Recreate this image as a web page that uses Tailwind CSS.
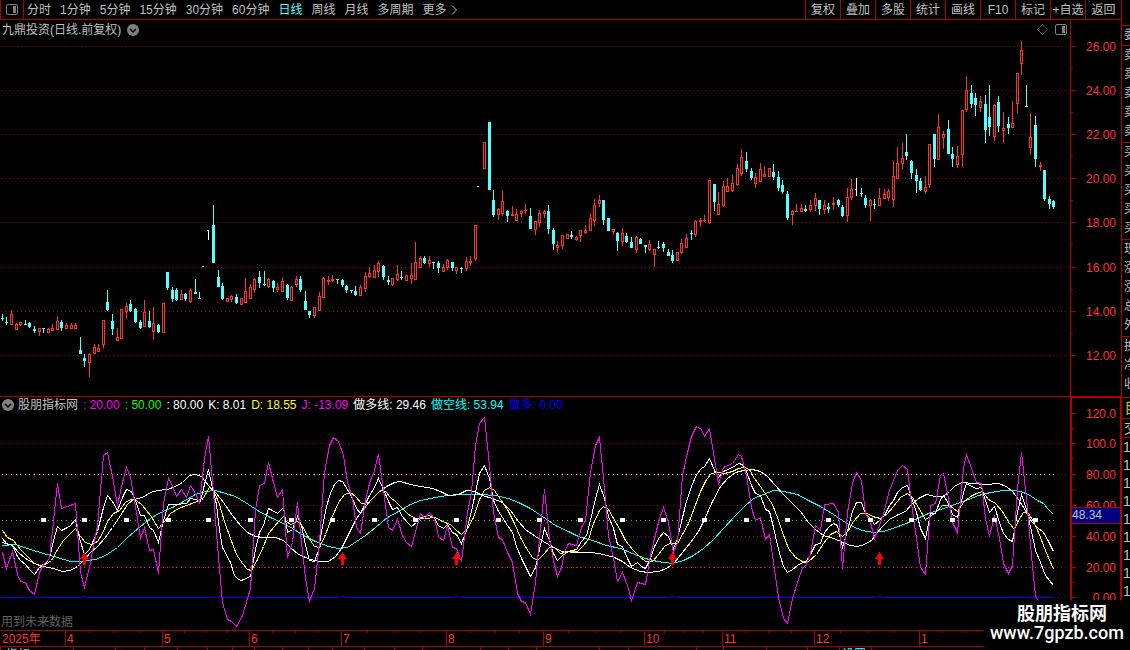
<!DOCTYPE html>
<html lang="zh-CN">
<head>
    <meta charset="UTF-8">
    <meta name="viewport" content="width=device-width, initial-scale=1.0">
    <title>九鼎投资 日线</title>
    <script src="https://cdn.jsdelivr.net/npm/@tailwindcss/browser@4"></script>
</head>
<body class="relative flex h-screen overflow-hidden bg-black font-['Liberation_Sans','Noto_Sans_CJK_SC',sans-serif] text-[12px] leading-[18px] text-[#c0c0c0]">

    <main class="flex min-w-0 flex-1 flex-col">
        <!-- Period tabs and tools -->
        <nav class="flex h-[20px] shrink-0 items-stretch justify-between border-b border-[#b00000] whitespace-nowrap">
            <div class="flex items-center gap-[9px]">
                <button aria-label="侧栏" class="-mr-[6px] flex h-full w-[24px] items-center justify-center border-x border-[#b00000]">
                    <svg width="12" height="11" fill="none"><rect x="0.5" y="0.5" width="11" height="10" rx="1.5" stroke="#808080"/><rect x="7" y="2" width="3" height="7" fill="#808080"/></svg>
                </button>
                <button>分时</button>
                <button>1分钟</button>
                <button>5分钟</button>
                <button>15分钟</button>
                <button>30分钟</button>
                <button>60分钟</button>
                <button class="text-[#54ffff]">日线</button>
                <button>周线</button>
                <button>月线</button>
                <button>多周期</button>
                <button class="flex items-center gap-1">更多
                    <svg width="7" height="10" fill="none" stroke="#c0c0c0"><path d="M1 0.5L5.5 5L1 9.5"/></svg>
                </button>
            </div>
            <div class="flex">
                <button class="w-[35px] border-l border-[#b00000]">复权</button>
                <button class="w-[35px] border-l border-[#b00000]">叠加</button>
                <button class="w-[35px] border-l border-[#b00000]">多股</button>
                <button class="w-[35px] border-l border-[#b00000]">统计</button>
                <button class="w-[35px] border-l border-[#b00000]">画线</button>
                <button class="w-[35px] border-l border-[#b00000]">F10</button>
                <button class="w-[35px] border-l border-[#b00000]">标记</button>
                <button class="w-[35px] border-l border-[#b00000]">+自选</button>
                <button class="w-[36px] border-l border-[#b00000]">返回</button>
            </div>
        </nav>

        <!-- Candles -->
        <section class="flex min-h-0 flex-1">
            <div class="flex min-w-0 flex-1 flex-col">
                <header class="flex h-[19px] shrink-0 items-center justify-between pr-[3px] pl-[2px]">
                    <div class="flex items-center gap-[6px]">
                        <h1>九鼎投资(日线.前复权)</h1>
                        <button aria-label="展开"><svg class="block" width="12" height="12"><circle cx="6" cy="6" r="6" fill="#808080"/><path d="M3 5L6 8L9 5" fill="none" stroke="#000" stroke-width="1.5"/></svg></button>
                    </div>
                    <div class="flex items-center gap-[7px]">
                        <svg width="11" height="11" fill="none" stroke="#808080"><path d="M5.5 0.5L10.5 5.5L5.5 10.5L0.5 5.5Z" stroke-dasharray="1 0.5"/></svg>
                        <svg width="12" height="11" fill="none"><rect x="0.5" y="0.5" width="11" height="10" rx="1.5" stroke="#808080"/><rect x="7" y="2" width="3" height="7" fill="#808080"/></svg>
                    </div>
                </header>
                <svg class="block min-h-0 w-full flex-1" shape-rendering="crispEdges"><g id="candles" transform="translate(0,-39)"></g></svg>
            </div>
            <svg class="block h-full w-[51px] shrink-0 border-l border-[#b00000]"><g id="priceAxis" transform="translate(-1071,-20)" shape-rendering="crispEdges"></g></svg>
        </section>

        <!-- Indicator -->
        <section class="flex h-[234px] shrink-0 border-t border-[#b00000]">
            <div class="relative flex min-w-0 flex-1 flex-col">
                <header class="flex h-[16px] shrink-0 items-center gap-[5px] pl-[2px] whitespace-nowrap">
                    <div class="flex items-center gap-[4px]">
                        <button aria-label="展开"><svg class="block" width="12" height="12"><circle cx="6" cy="6" r="6" fill="#808080"/><path d="M3 5L6 8L9 5" fill="none" stroke="#000" stroke-width="1.5"/></svg></button>
                        <h2>股朋指标网</h2>
                    </div>
                    <span class="text-[#ff00ff]">: 20.00</span>
                    <span class="text-[#00ff00]">: 50.00</span>
                    <span class="text-white">: 80.00</span>
                    <span class="text-white">K: 8.01</span>
                    <span class="text-[#ffff00]">D: 18.55</span>
                    <span class="text-[#ff00ff]">J: -13.09</span>
                    <span class="text-white">做多线: 29.46</span>
                    <span class="text-[#00ffff]">做空线: 53.94</span>
                    <span class="text-[#0000ff]">做多: 0.00</span>
                </header>
                <svg class="block min-h-0 w-full flex-1" shape-rendering="crispEdges"><g id="indicator" transform="translate(0,-413)"></g></svg>
                <p class="absolute bottom-0 left-[1px] leading-[16px] text-[#606060]">用到未来数据</p>
            </div>
            <svg class="block h-full w-[51px] shrink-0 border-t border-r border-l-2 border-[#b00000]"><g id="valueAxis" transform="translate(-1072,-398)" shape-rendering="crispEdges"></g></svg>
        </section>

        <!-- Months -->
        <footer class="h-[20px] shrink-0 border-t border-[#b00000]">
            <svg class="block h-full w-full"><g id="months" transform="translate(0,-631)" shape-rendering="crispEdges"></g></svg>
        </footer>
    </main>

    <!-- Quote panel, only its left edge is on screen -->
    <aside class="w-[9px] shrink-0 overflow-hidden border-l border-[#b00000] leading-[19px]">
        <div class="h-[26px] border-b border-[#b00000]"></div>
        <div class="h-[20px] border-b border-[#b00000] pl-[2px]">委</div>
        <div class="h-[97px] border-b border-[#b00000] pl-[2px]"><p>卖</p><p>卖</p><p>卖</p><p>卖</p><p>卖</p></div>
        <div class="h-[97px] border-b border-[#b00000] pl-[2px]"><p>买</p><p>买</p><p>买</p><p>买</p><p>买</p></div>
        <div class="h-[97px] border-b border-[#b00000] pl-[2px]"><p>现</p><p>涨</p><p>涨</p><p>总</p><p>外</p></div>
        <div class="h-[61px] border-b border-[#b00000] pl-[2px]"><p>换</p><p>净</p><p>收</p></div>
        <div class="h-[21px] border-b border-[#b00000] pl-[2px] text-[16px] text-[#c0c000]">自</div>
        <div class="h-[19px] border-b border-[#b00000] pl-[2px] text-[14px]">交</div>
        <div class="pl-[1px] text-[14px] leading-[18px]"><p>1</p><p>1</p><p>1</p><p>1</p><p>1</p><p>1</p><p>1</p><p>1</p><p>1</p></div>
    </aside>

    <!-- Site mark -->
    <div class="absolute right-0 bottom-0 h-[50px] w-[146px] bg-black pt-[4px] pl-[6px] text-white">
        <p class="pl-[27px] text-[18px] leading-[20px] font-bold whitespace-nowrap">股朋指标网</p>
        <p class="font-[Roboto,sans-serif] text-[18px] leading-[18px] font-medium">www.7gpzb.com</p>
    </div>

    <script>
        const NS = 'http://www.w3.org/2000/svg';
        const RED = '#b00000';

        function add(parent, tag, attrs, text) {
            const el = document.createElementNS(NS, tag);
            for (const k in attrs) el.setAttribute(k, attrs[k]);
            if (text) el.textContent = text;
            parent.appendChild(el);
            return el;
        }
        function box(parent, x, y, w, h, fill) {
            add(parent, 'rect', { x, y, width: w, height: h, fill });
        }
        function dots(parent, y, color, from, to) {
            add(parent, 'path', { d: `M${from} ${y + 0.5}H${to}`, stroke: color, 'stroke-dasharray': '1 3' });
        }

        // ---- Candles: x, high, body top, body bottom, low, kind (r up, c down, w flat)
        const candles = `
2 314 318 318 320 c|6 317 322 322 324 c|11 310 314 324 324 r|16 323 324 329 329 r|20 322 322 324 325 r|25 320 324 324 324 c
29 322 323 326 327 c|34 326 329 330 332 c|39 328 328 331 335 r|43 328 328 328 332 c|48 328 329 332 332 r|52 324 328 330 330 r
57 316 321 329 329 r|61 320 322 327 330 c|66 323 325 328 328 r|71 323 325 328 328 r|75 323 325 328 328 r|80 337 350 353 353 c
84 354 358 360 366 c|89 353 354 362 376 r|94 344 347 353 353 r|98 344 348 351 351 r|103 320 320 344 347 r|107 290 302 309 310 c
112 314 321 328 334 c|117 328 337 340 340 r|121 309 309 338 338 r|126 303 306 311 318 r|130 300 304 310 311 c|135 308 309 321 322 c
140 320 322 327 328 c|144 300 312 326 326 r|149 311 321 326 327 c|153 307 323 331 339 r|158 324 325 331 332 c|163 303 303 332 332 r
167 272 272 287 289 c|172 287 290 298 301 c|176 288 290 299 300 c|181 290 294 299 299 r|185 293 294 298 300 c|190 288 290 301 302 r
195 279 292 293 293 c|199 292 298 298 298 c|203 266 266 266 266 w|208 230 230 230 239 w|213 205 225 262 262 c|218 270 277 286 286 c
222 283 286 298 299 c|227 298 298 301 301 r|231 295 296 299 301 r|236 294 297 302 303 c|241 298 298 304 304 r|245 278 291 302 302 r
250 284 287 298 298 r|254 278 279 289 292 r|259 271 277 282 287 c|264 271 284 284 285 c|268 278 279 286 287 r|273 280 281 287 291 c
277 283 287 289 291 r|282 277 281 291 291 r|287 284 285 297 299 c|291 286 287 300 300 r|296 276 279 284 286 r|300 276 279 289 291 c
305 291 301 309 309 c|309 311 311 314 317 c|314 307 307 315 317 r|319 292 296 310 310 r|323 277 278 297 297 r|328 276 280 281 284 r
332 275 279 280 281 r|337 279 279 279 283 c|342 279 280 284 286 c|346 285 286 289 292 c|351 290 290 290 292 c|355 286 291 294 295 c
360 285 287 295 295 r|365 272 276 288 291 r|369 267 273 276 277 r|374 265 270 277 277 r|378 261 263 271 276 r|383 265 266 276 279 c
388 276 280 281 284 c|392 278 278 284 285 r|397 265 274 279 280 r|401 271 277 277 279 c|406 275 275 280 280 r|411 263 275 278 283 r
415 242 262 279 279 r|420 256 258 267 267 r|424 256 258 262 263 c|429 256 260 263 266 r|433 262 262 262 268 c|438 261 263 267 272 c
443 264 267 271 271 r|447 259 260 267 269 r|452 262 262 267 270 c|456 267 267 270 273 r|461 267 268 268 272 c|466 257 261 268 270 r
470 256 261 262 265 r|475 225 225 258 260 r|478 186 186 186 186 w|484 142 142 168 168 r|489 122 122 189 189 c|493 190 200 214 216 c
498 208 209 214 219 r|502 191 201 213 215 r|507 210 211 215 221 c|512 206 214 215 215 r|516 209 214 220 220 r|521 210 211 213 216 r
525 204 210 210 213 r|530 208 216 228 228 c|535 221 221 229 234 r|539 210 213 222 226 r|544 210 211 213 217 r|548 205 211 228 233 c
553 228 230 243 249 c|557 241 245 247 252 r|562 235 235 245 248 r|567 234 234 238 238 r|571 231 235 236 238 c|576 236 237 239 240 r
580 230 230 235 241 r|585 225 230 232 233 r|590 213 218 230 230 r|594 199 205 220 225 r|599 195 200 203 206 r|603 200 200 219 224 c
608 218 218 230 230 c|613 229 229 231 234 r|617 232 233 240 250 c|622 228 233 241 245 r|626 233 236 241 242 c|631 237 242 247 247 c
636 236 237 249 252 r|640 238 239 243 243 c|645 245 245 246 252 c|649 240 244 249 250 r|654 249 249 254 266 r|658 241 247 247 248 c
663 242 244 247 251 c|668 249 252 255 255 c|672 250 255 260 262 c|677 252 252 260 260 r|681 239 243 252 253 r|686 234 238 247 247 r
691 230 233 233 239 c|695 220 221 234 236 r|700 218 220 221 226 r|704 215 220 220 221 r|709 180 180 222 223 r|714 184 184 201 210 c
718 192 204 214 214 r|723 181 186 205 206 r|727 178 186 191 191 r|732 175 183 190 191 r|737 164 168 184 185 r|741 149 157 173 175 r
746 152 161 168 171 c|751 168 171 177 179 c|755 173 177 183 187 r|760 163 169 181 181 r|764 166 174 176 176 r|769 168 168 176 176 r
773 164 172 176 179 c|778 171 177 187 190 c|782 180 185 191 193 c|787 191 194 217 219 c|792 210 211 214 224 r|796 204 211 211 211 r
801 204 208 211 211 r|805 205 209 210 211 c|810 200 205 209 211 r|815 193 198 205 210 r|819 200 200 208 214 c|824 200 205 209 213 r
828 203 207 208 212 c|833 197 203 204 209 r|838 199 200 204 206 c|842 205 207 215 216 c|847 188 197 215 221 r|851 179 189 197 199 r
856 178 189 189 195 w|861 188 193 193 196 c|865 195 198 204 207 c|870 199 200 205 220 r|874 199 204 204 208 c|879 188 198 205 205 r
884 189 194 198 198 r|888 189 191 197 200 r|893 161 176 199 206 r|897 147 163 178 178 r|902 143 158 163 168 r|906 134 152 155 159 c
911 160 161 172 178 c|916 169 175 180 192 c|920 178 181 189 190 c|925 176 187 191 193 r|929 144 144 184 187 r|934 134 134 158 166 c
938 114 127 159 159 r|943 131 134 137 148 r|948 120 129 153 153 c|952 147 154 158 166 c|957 146 156 164 167 r|962 110 110 154 166 r
966 76 90 109 111 r|971 85 93 103 107 c|975 93 98 104 115 c|980 96 101 107 111 r|985 95 104 129 142 c|989 85 117 126 135 c
994 104 105 136 140 r|998 96 102 125 131 c|1003 112 128 130 142 r|1008 117 124 127 133 c|1012 101 123 127 127 r|1017 73 73 103 112 r
1021 41 50 63 74 r|1026 85 106 106 106 c|1030 113 137 147 154 r|1035 116 125 158 166 c|1040 162 165 166 170 r|1044 170 170 198 200 c
1049 196 199 203 208 c|1053 200 201 206 208 c`;

        const fills = { r: '#ff3232', c: '#54ffff', w: '#ffffff' };
        const cg = document.getElementById('candles');
        const priceRows = [46, 90, 134, 178, 222, 267, 311, 355];
        const barXs = [];
        priceRows.forEach(y => dots(cg, y, RED, 1, 1067));

        candles.trim().split(/[|\n]/).forEach(row => {
            const p = row.split(' ');
            const [x, hi, top, bot, lo] = p.map(Number);
            const fill = fills[p[5]];
            barXs.push(x);
            box(cg, x, hi, 1, lo - hi + 1, fill);
            if (p[5] === 'w') {
                box(cg, x - 1, top, 2, 1, fill);
                return;
            }
            box(cg, x - 1, top, 3, bot - top + 1, fill);
            if (p[5] === 'r' && bot - top > 1) box(cg, x, top + 1, 1, bot - top - 1, '#000');
        });

        // ---- Price axis
        const pa = document.getElementById('priceAxis');
        priceRows.forEach((y, i) => {
            box(pa, 1071, y, 5, 1, RED);
            if (i < 7) box(pa, 1071, y + 22, 2, 1, RED);
            add(pa, 'text', { x: 1086, y: y + 5, fill: '#ff3232' }, (26 - i * 2).toFixed(2));
        });

        // ---- Indicator lines
        const lines = [
            ['#00ffff', '2,545 15,544 30,549 43,553 57,557 70,561 83,561 95,559 105,555 117,547 127,537 140,526 150,518 160,512 172,507 183,501 195,494 205,491 215,490 225,493 235,496 245,502 257,510 270,517 285,524 292,528 303,535 315,541 328,546 338,548 347,547 356,541 365,535 375,527 387,517 398,511 410,504 420,500 435,497 447,495 465,494 480,494 495,495 508,498 518,502 530,508 542,516 555,525 570,532 578,536 592,540 606,545 620,548 632,553 645,558 657,561 672,563 683,560 693,555 703,548 713,539 723,528 735,515 745,505 753,498 763,494 773,490 783,491 797,494 808,500 818,505 830,512 842,520 852,526 862,530 873,532 883,531 895,527 906,523 915,519 923,515 934,511 946,507 957,503 968,499 978,495 990,492 1003,490 1013,490 1020,491 1028,494 1037,500 1043,503 1048,509 1053,514'],
            ['#ffffff', '2,542 12,545 18,552 25,558 34,563 43,566 53,568 62,571 70,570 77,566 84,559 90,552 97,546 104,538 112,527 120,515 127,504 133,499 142,497 150,492 157,490 167,489 175,486 182,482 189,475 195,474 201,476 208,485 216,493 223,502 232,515 240,525 247,532 255,536 263,537 275,537 283,540 290,547 298,554 310,559 319,561 328,561 335,556 341,548 349,532 356,518 362,510 370,500 378,492 386,486 394,482 400,481 410,484 420,486 432,488 440,491 448,495 458,494 466,490 474,491 482,495 492,498 502,502 510,510 518,521 525,529 535,536 543,541 553,547 562,551 577,552 592,552 603,554 614,557 622,561 630,567 640,571 648,572 658,571 666,568 674,562 682,552 690,542 698,531 704,519 712,501 720,486 727,478 735,472 743,470 752,469 760,471 767,476 774,484 783,494 792,503 800,511 808,522 815,529 823,535 833,538 843,542 850,545 857,546 864,544 871,540 876,533 882,526 889,519 898,514 905,511 911,504 918,498 926,494 935,496 943,496 949,491 955,485 962,482 972,483 985,484 998,483 1006,486 1012,491 1018,499 1025,510 1031,521 1037,527 1043,532 1048,541 1053,551'],
            ['#ffff00', '2,530 7,537 13,540 20,549 27,556 33,562 38,565 45,564 51,560 57,549 63,540 70,533 75,528 80,536 85,542 91,544 97,541 102,533 107,521 113,513 119,510 125,502 130,499 136,500 142,505 150,515 158,528 164,521 170,513 178,508 186,505 194,502 201,500 205,494 209,487 214,492 219,504 224,521 230,538 236,554 242,563 247,569 251,570 257,559 263,546 268,533 274,526 279,520 283,516 286,521 290,524 297,521 302,526 308,537 314,546 319,547 325,534 331,518 338,502 344,494 350,492 355,496 361,503 368,502 374,496 380,490 385,491 390,497 396,502 402,508 408,514 415,518 425,518 435,517 442,521 450,524 456,530 461,534 467,528 473,517 479,499 484,490 489,487 494,490 500,499 507,509 514,523 520,537 526,548 532,557 537,560 543,554 549,547 554,547 560,553 568,551 577,551 583,545 588,539 593,523 599,510 603,506 608,509 613,518 619,528 625,540 632,549 639,556 645,561 652,561 658,554 664,546 669,543 677,543 682,534 688,523 694,507 700,491 706,479 711,473 716,472 724,473 732,471 738,468 744,467 749,469 754,478 760,486 766,495 772,504 777,517 782,532 788,548 795,557 802,561 808,561 816,554 823,543 830,534 836,531 842,536 848,530 853,521 860,513 867,513 872,516 880,518 886,514 893,506 900,497 907,493 912,497 918,507 925,519 934,513 942,505 949,505 957,511 963,502 970,496 976,493 982,491 988,499 995,503 1002,511 1009,523 1014,529 1018,520 1023,512 1028,513 1033,521 1038,532 1045,550 1053,569'],
            ['#ffffff', '2,538 6,543 12,545 17,556 20,560 25,564 29,569 34,574 39,567 43,565 49,558 53,540 57,526 61,530 67,527 70,525 75,519 79,538 84,554 89,549 97,531 103,507 107,495 112,501 117,510 122,497 126,489 131,491 135,500 140,515 144,515 149,527 153,530 158,542 163,520 168,504 176,504 186,503 190,498 195,499 200,501 204,484 208,469 211,483 216,504 219,530 222,547 230,562 234,575 238,579 241,580 250,576 255,549 259,532 263,525 268,508 272,510 277,513 283,507 287,532 292,529 297,516 301,525 305,545 309,560 314,561 318,550 322,526 326,506 330,493 334,484 338,480 342,481 347,489 352,498 356,508 360,513 365,503 369,495 374,487 378,478 383,489 388,501 392,509 397,507 402,516 406,521 411,526 416,522 420,517 429,515 434,518 438,525 443,528 447,524 452,532 456,534 461,543 467,527 471,511 475,492 479,473 484,465 489,478 493,500 498,511 502,517 507,525 512,532 516,546 521,558 525,566 530,576 535,567 539,549 544,528 549,540 553,553 557,560 563,554 568,551 576,549 581,541 586,535 590,520 595,498 599,484 604,498 608,516 613,528 617,544 622,546 627,558 631,566 637,562 641,566 645,568 650,558 654,546 659,537 663,532 668,536 673,548 677,538 682,517 686,501 691,486 696,474 701,468 704,466 709,458 714,470 718,477 723,471 732,467 738,463 742,464 746,471 751,485 755,493 760,495 765,509 769,511 773,527 778,549 783,566 787,572 792,569 797,565 802,562 805,562 810,554 815,544 820,543 824,532 829,526 833,523 837,525 842,547 847,530 852,511 856,502 861,502 865,513 870,518 874,524 879,520 884,515 889,505 893,500 897,492 902,487 907,485 911,497 916,512 920,528 925,538 930,513 935,513 940,499 943,495 948,503 952,514 957,517 960,505 963,492 966,483 971,486 976,488 981,487 985,500 989,512 994,506 999,522 1003,533 1008,539 1012,541 1017,512 1021,494 1026,509 1031,531 1035,550 1040,562 1045,575 1049,580 1053,585'],
            ['#ff00ff', '2,552 6,568 12,551 17,574 20,581 25,582 29,590 34,594 39,572 43,564 49,558 57,483 61,508 67,506 75,503 80,572 84,587 89,567 97,525 103,455 107,452 113,481 117,505 122,482 126,467 130,477 134,500 140,538 144,527 149,550 153,549 158,573 163,503 168,478 172,485 176,496 181,489 186,497 190,485 195,493 199,503 204,458 208,436 213,492 217,545 222,602 227,619 231,621 236,626 242,615 250,588 255,510 259,485 264,483 268,462 273,482 277,497 282,489 287,557 292,542 297,502 301,542 305,578 309,601 314,588 319,542 324,472 329,445 333,437 338,441 343,455 347,482 352,498 356,527 360,533 365,500 369,483 374,470 378,454 383,490 388,527 392,530 397,519 402,535 406,542 411,546 420,513 424,518 429,512 434,518 438,536 443,540 447,525 452,547 456,548 461,561 467,512 471,492 475,445 479,423 484,417 489,465 493,512 498,537 502,539 507,552 512,562 517,593 521,601 525,602 530,614 535,582 539,538 544,489 549,538 553,560 557,576 561,567 564,552 568,543 576,545 581,527 585,520 590,472 595,445 599,437 604,488 608,535 613,558 617,581 622,572 627,585 631,600 637,582 645,584 650,555 654,538 659,518 663,507 668,522 673,552 677,542 682,475 687,452 691,436 696,426 701,429 704,436 709,428 714,458 718,484 723,467 732,463 738,454 741,456 746,475 751,507 755,520 760,517 765,539 769,534 773,562 778,597 783,618 787,623 792,598 797,582 802,567 805,566 810,553 815,525 820,530 824,504 833,503 838,512 842,568 847,512 852,483 856,472 861,480 865,513 870,522 874,538 879,525 884,510 889,490 897,470 902,465 907,469 911,503 916,538 920,567 925,574 930,505 935,503 940,475 943,473 948,498 952,522 957,532 963,468 966,454 971,468 976,482 981,483 985,518 989,536 994,515 999,538 1003,563 1008,573 1012,565 1017,488 1021,452 1026,498 1031,555 1035,595 1038,602']
        ];
        const ig = document.getElementById('indicator');
        [443, 474, 505, 536, 567, 597].forEach(y => dots(ig, y, RED, 1, 1067));
        // one level dot per bar
        barXs.forEach(x => {
            box(ig, x, 474, 1, 1, '#ffffff');
            box(ig, x, 520, 1, 1, '#00ff00');
            box(ig, x, 567, 1, 1, '#ff00ff');
        });
        box(ig, 2, 597, 1051, 1, '#0000ff');
        lines.forEach(([stroke, points]) => add(ig, 'polyline', { points, stroke, fill: 'none', transform: 'translate(0.5,0.5)' }));

        [43, 84, 126, 168, 208, 250, 291, 332, 374, 415, 456, 498, 539, 580, 622, 663, 704, 746, 787, 828, 870, 911, 952, 994, 1035]
            .forEach(x => box(ig, x - 2, 518, 5, 4, '#fff'));

        // Buy signals
        [84, 342, 456, 672, 879].forEach(x => {
            add(ig, 'path', { d: `M${x + 0.5} 552L${x + 5} 559H${x + 2}V565H${x - 1}V559H${x - 4}Z`, fill: '#ff0000' });
            box(ig, x - 2, 597, 5, 1, '#000');
            box(ig, x - 2, 596, 5, 1, '#0000ff');
        });

        // ---- Value axis
        const va = document.getElementById('valueAxis');
        [[413, '120.0'], [443, '100.0'], [474, '80.00'], [505, '60.00'], [536, '40.00'], [567, '20.00'], [597, '0.00']].forEach(([y, label]) => {
            box(va, 1072, y, 4, 1, RED);
            box(va, 1072, y + 15, 2, 1, RED);
            add(va, 'text', { x: 1116, y: y + 5, fill: '#ff3232', 'text-anchor': 'end' }, label);
        });
        box(va, 1072, 507, 48, 17, RED);
        box(va, 1072, 508, 48, 15, '#000080');
        add(va, 'text', { x: 1072, y: 519, fill: '#c0c0c0' }, '48.34');

        // ---- Months
        const mg = document.getElementById('months');
        box(mg, 0, 646, 1121, 1, RED);
        add(mg, 'text', { x: 2, y: 643, fill: '#ff3232' }, '2025年');
        [[65, '4'], [162, '5'], [249, '6'], [341, '7'], [446, '8'], [543, '9'], [644, '10'], [722, '11'], [814, '12'], [919, '1']].forEach(([x, label]) => {
            box(mg, x, 631, 1, 15, RED);
            add(mg, 'text', { x: x + 2, y: 643, fill: '#ff3232' }, label);
        });
        [89, 114, 139, 184, 206, 227, 272, 295, 318, 367, 394, 420, 470, 495, 519, 568, 595, 620, 664, 683, 703, 745, 768, 791, 840, 868, 893, 942, 965]
            .forEach(x => box(mg, x, 631, 1, 2, RED));
        [0, 73, 115, 144, 177, 207, 232, 254, 282, 308, 332, 364, 394, 422, 480, 508, 536, 599, 628, 696, 723, 766, 807, 839, 871]
            .forEach(x => box(mg, x, 647, 1, 3, RED));
        add(mg, 'text', { x: 6, y: 659, fill: '#c0c0c0' }, '指标');
        add(mg, 'text', { x: 842, y: 659, fill: '#54ffff' }, '设置');
    </script>
</body>
</html>
